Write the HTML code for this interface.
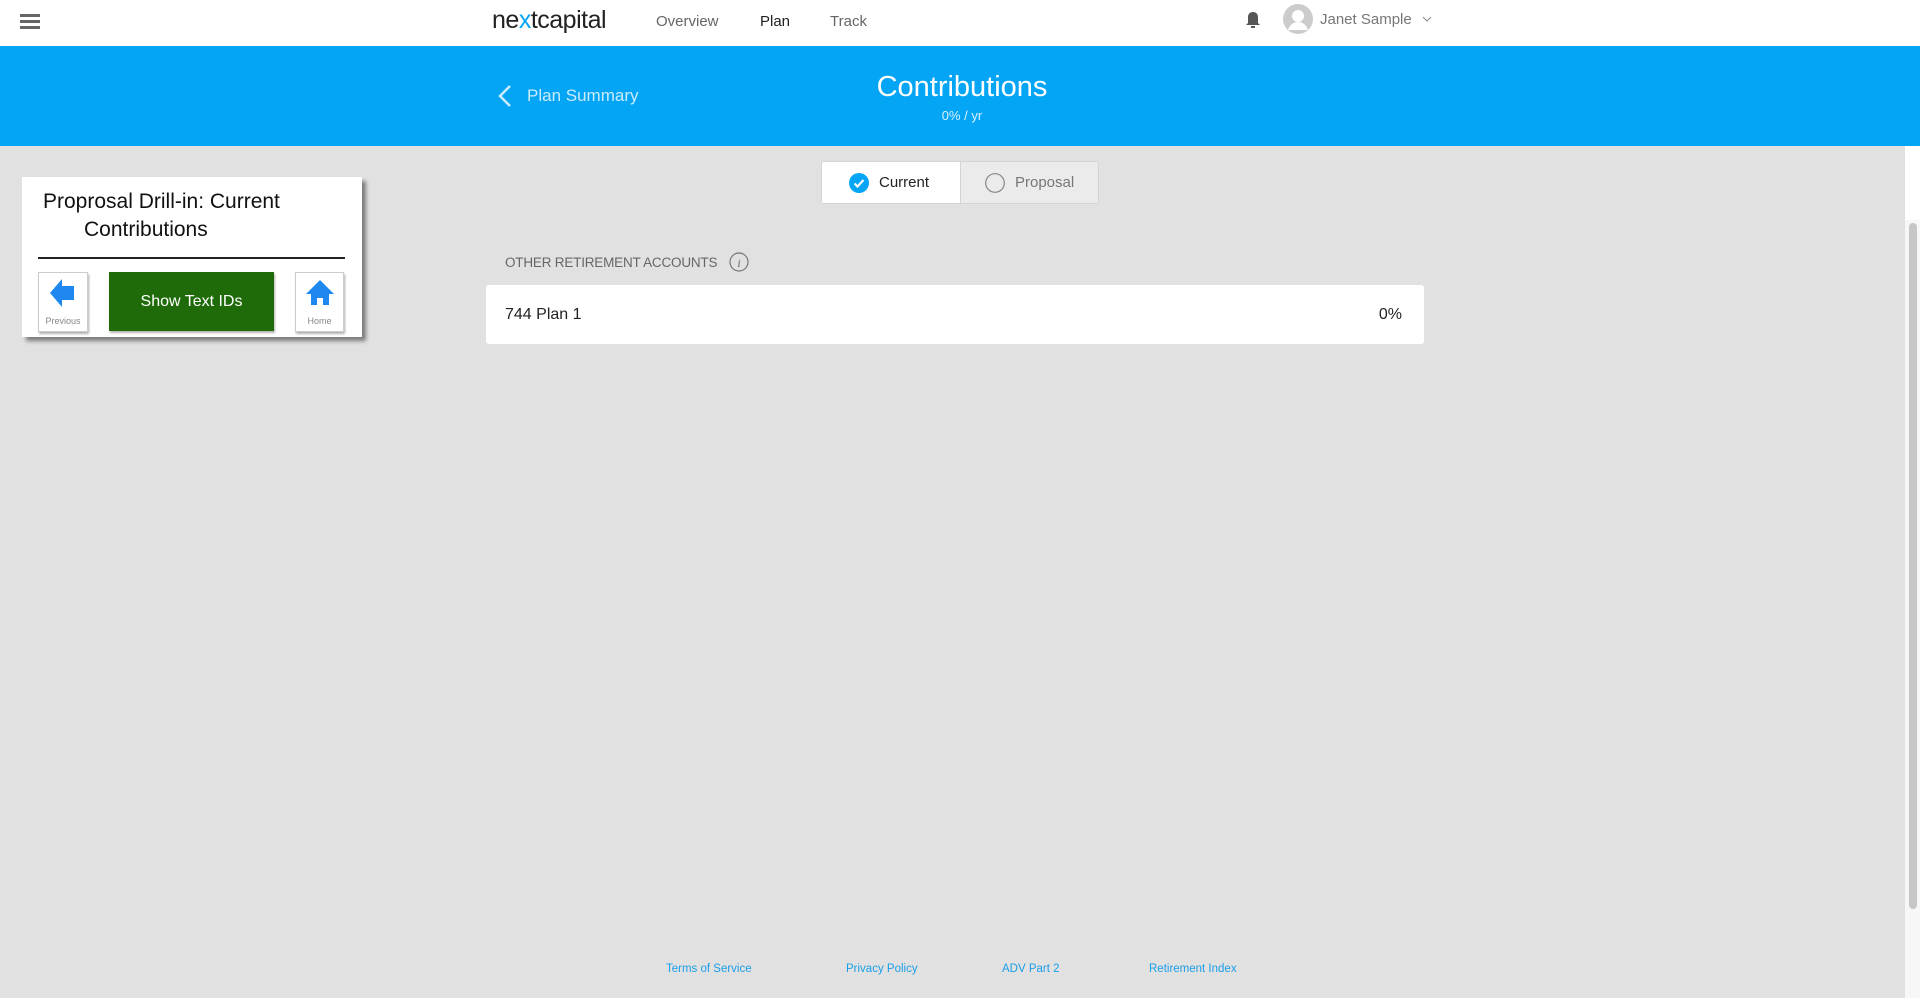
<!DOCTYPE html>
<html><head><meta charset="utf-8"><style>
*{margin:0;padding:0;box-sizing:border-box}
body{width:1924px;height:1001px;overflow:hidden;background:#fff;font-family:"Liberation Sans",sans-serif;position:relative}
.a{position:absolute;white-space:nowrap}
</style></head><body>
<div class="a" style="left:0;top:0;width:1920px;height:46px;background:#fff"></div>
<div class="a" style="left:0;top:46px;width:1920px;height:100px;background:#05a5f5"></div>
<div class="a" style="left:0;top:146px;width:1905px;height:852px;background:#e1e1e1"></div>
<div class="a" style="left:1905px;top:220px;width:15px;height:778px;background:#f7f7f7"></div>
<div class="a" style="left:1909px;top:223px;width:8px;height:686px;background:#c6c6c6;border-radius:4px"></div>
<!-- hamburger -->
<div class="a" style="left:20px;top:14px;width:20px;height:3px;background:#666;box-shadow:0 6px 0 #666,0 12px 0 #666"></div>
<div class="a" style="left:492px;top:6px;font-size:25px;color:#222;letter-spacing:-0.5px">ne<span style="color:#05a5f5">x</span>tcapital</div>
<div class="a" style="left:656px;top:13px;font-size:15px;color:#666">Overview</div>
<div class="a" style="left:760px;top:13px;font-size:15px;color:#222">Plan</div>
<div class="a" style="left:830px;top:13px;font-size:15px;color:#666">Track</div>
<svg class="a" style="left:1243px;top:11px" width="20" height="18" viewBox="0 0 20 18"><path d="M10 1c-3 0-5 2-5 5v6l-2 2h14l-2-2V6c0-3-2-5-5-5z" fill="#555"/><rect x="8" y="15" width="4" height="2" fill="#555"/></svg>
<svg class="a" style="left:1283px;top:4px" width="30" height="30" viewBox="0 0 30 30"><circle cx="15" cy="15" r="15" fill="#ccc"/><circle cx="15" cy="12" r="6" fill="#fff"/><path d="M5 26c2-6 6-8 10-8s8 2 10 8" fill="#fff"/></svg>
<div class="a" style="left:1320px;top:11px;font-size:15px;color:#777">Janet Sample</div>
<svg class="a" style="left:1422px;top:16px" width="10" height="6"><path d="M1 1l4 4 4-4" stroke="#888" fill="none"/></svg>
<!-- blue band -->
<svg class="a" style="left:497px;top:84px" width="15" height="24"><path d="M13 2L3 12l10 10" stroke="#c9ecfd" stroke-width="2.5" fill="none"/></svg>
<div class="a" style="left:527px;top:86px;font-size:17px;color:#c9ecfd">Plan Summary</div>
<div class="a" style="left:0;width:1924px;text-align:center;top:71px;font-size:29px;color:#fff">Contributions</div>
<div class="a" style="left:0;width:1924px;text-align:center;top:108px;font-size:13px;color:#d9f1fe">0% / yr</div>
<!-- panel -->
<div class="a" style="left:22px;top:177px;width:340px;height:160px;background:#fff;box-shadow:4px 4px 4px rgba(0,0,0,.45)"></div>
<div class="a" style="left:43px;top:188px;font-size:21px;color:#111;line-height:28px">Proprosal Drill-in: Current</div>
<div class="a" style="left:84px;top:216px;font-size:21px;color:#111;line-height:28px">Contributions</div>
<div class="a" style="left:38px;top:257px;width:307px;height:2px;background:#222"></div>
<div class="a" style="left:38px;top:272px;width:50px;height:60px;background:#fff;border:1px solid #ccc;box-shadow:1px 2px 2px rgba(0,0,0,.3)"></div>
<svg class="a" style="left:48px;top:276px" width="30" height="34"><path d="M2 17L14 3v7h12v14H14v7z" fill="#1e88f0"/></svg>
<div class="a" style="left:38px;top:316px;width:50px;text-align:center;font-size:9px;color:#888">Previous</div>
<div class="a" style="left:109px;top:272px;width:165px;height:59px;background:#1f6b0a;box-shadow:1px 2px 2px rgba(0,0,0,.3);color:#fff;font-size:16px;text-align:center;line-height:59px">Show Text IDs</div>
<div class="a" style="left:295px;top:272px;width:49px;height:60px;background:#fff;border:1px solid #ccc;box-shadow:1px 2px 2px rgba(0,0,0,.3)"></div>
<svg class="a" style="left:305px;top:279px" width="30" height="28"><path d="M15 1L1 15h5v11h6v-7h6v7h6V15h5z" fill="#1e88f0"/></svg>
<div class="a" style="left:295px;top:316px;width:49px;text-align:center;font-size:9px;color:#888">Home</div>
<!-- toggle -->
<div class="a" style="left:821px;top:161px;width:278px;height:43px;border:1px solid #d4d4d4;border-radius:3px;background:#ebebeb;overflow:hidden"><div style="width:139px;height:100%;background:#fff;border-right:1px solid #d4d4d4"></div></div>
<svg class="a" style="left:849px;top:173px" width="20" height="20"><circle cx="10" cy="10" r="10" fill="#05a5f5"/><path d="M5.5 10.5l3 3 6-6.5" stroke="#fff" stroke-width="2.2" fill="none"/></svg>
<div class="a" style="left:879px;top:174px;font-size:15px;color:#222">Current</div>
<svg class="a" style="left:985px;top:173px" width="20" height="20"><circle cx="10" cy="10" r="9.3" fill="none" stroke="#888" stroke-width="1.2"/></svg>
<div class="a" style="left:1015px;top:174px;font-size:15px;color:#777">Proposal</div>
<!-- accounts -->
<div class="a" style="left:505px;top:255px;font-size:13.5px;color:#666;letter-spacing:-0.2px">OTHER RETIREMENT ACCOUNTS</div>
<svg class="a" style="left:729px;top:252px" width="20" height="20"><circle cx="10" cy="10" r="9" fill="none" stroke="#777" stroke-width="1.2"/><text x="10" y="15" font-size="12" font-style="italic" font-family="Liberation Serif" text-anchor="middle" fill="#666">i</text></svg>
<div class="a" style="left:486px;top:285px;width:938px;height:59px;background:#fff;border-radius:3px"></div>
<div class="a" style="left:505px;top:306px;font-size:16px;color:#222">744 Plan 1</div>
<div class="a" style="left:1300px;width:102px;text-align:right;top:306px;font-size:16px;color:#222">0%</div>
<!-- footer -->
<div class="a" style="left:666px;top:963px;font-size:11.5px;color:#1a9ee8">Terms of Service</div>
<div class="a" style="left:846px;top:963px;font-size:11.5px;color:#1a9ee8">Privacy Policy</div>
<div class="a" style="left:1002px;top:963px;font-size:11.5px;color:#1a9ee8">ADV Part 2</div>
<div class="a" style="left:1149px;top:963px;font-size:11.5px;color:#1a9ee8">Retirement Index</div>
</body></html>
